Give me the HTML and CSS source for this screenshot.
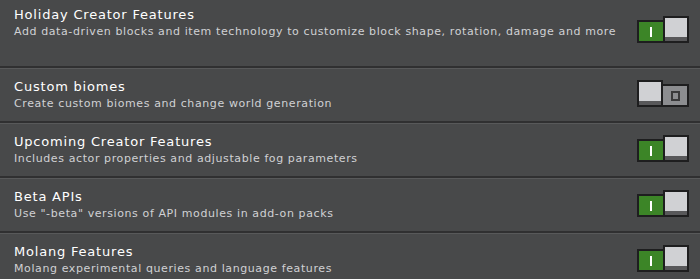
FILE: index.html
```html
<!DOCTYPE html>
<html lang="en">
<head>
  <meta charset="UTF-8">
  <meta name="viewport" content="width=device-width, initial-scale=1.0">
  <title>Experiments</title>
  <link rel="stylesheet" href="styles.css">
</head>
<body>
  <div class="list">
    <!-- Holiday -->
    <div class="row first">
      <div class="text">
        <div class="title">Holiday Creator Features</div>
        <div class="desc">Add data-driven blocks and item technology to customize block shape, rotation, damage and more</div>
      </div>
      <div class="toggle on">
        <div class="track"><span class="bar"></span></div>
        <div class="knob"></div>
      </div>
    </div>

    <div class="row">
      <div class="text">
        <div class="title">Custom biomes</div>
        <div class="desc">Create custom biomes and change world generation</div>
      </div>
      <div class="toggle off">
        <div class="knob"></div>
        <div class="track"><span class="ring"></span></div>
      </div>
    </div>

    <div class="row">
      <div class="text">
        <div class="title">Upcoming Creator Features</div>
        <div class="desc">Includes actor properties and adjustable fog parameters</div>
      </div>
      <div class="toggle on">
        <div class="track"><span class="bar"></span></div>
        <div class="knob"></div>
      </div>
    </div>

    <div class="row">
      <div class="text">
        <div class="title">Beta APIs</div>
        <div class="desc">Use "-beta" versions of API modules in add-on packs</div>
      </div>
      <div class="toggle on">
        <div class="track"><span class="bar"></span></div>
        <div class="knob"></div>
      </div>
    </div>

    <div class="row">
      <div class="text">
        <div class="title">Molang Features</div>
        <div class="desc">Molang experimental queries and language features</div>
      </div>
      <div class="toggle on">
        <div class="track"><span class="bar"></span></div>
        <div class="knob"></div>
      </div>
    </div>
  </div>
</body>
</html>
```

FILE: styles.css
```css
body {
  margin: 0;
  padding: 0;
  background-color: #48494a;
  font-family: "DejaVu Sans", sans-serif;
  overflow: hidden;
}
.list {
  width: 700px;
}
.row {
  display: flex;
  justify-content: space-between;
  align-items: flex-start;
  height: 53px;
  padding: 0 11px 0 14px;
  border-top: 2px solid #303031;
  box-shadow: inset 0 1px 0 #58595a;
}
.row.first {
  height: 66px;
  border-top: none;
  box-shadow: none;
}
.text {
  margin-top: 11px;
}
.first .text {
  margin-top: 7px;
}
.title {
  color: #ffffff;
  font-size: 13px;
  line-height: 16px;
  letter-spacing: 0.8px;
}
.desc {
  color: #d0d1d4;
  font-size: 11px;
  line-height: 14px;
  margin-top: 2px;
  letter-spacing: 0.6px;
}
.toggle {
  display: flex;
  align-items: flex-end;
  margin-top: 12px;
}
.first .toggle {
  margin-top: 16px;
}
.track {
  width: 24px;
  height: 19px;
  border: 2px solid #1e1e1f;
  display: flex;
  align-items: center;
  justify-content: center;
}
.on .track {
  background-color: #3c8527;
  margin-right: -2px;
}
.off .track {
  background-color: #8c8d90;
  margin-left: -2px;
}
.knob {
  width: 22px;
  height: 23px;
  border: 2px solid #1e1e1f;
  background-color: #d0d1d4;
  box-shadow: inset 0 -4px 0 #58585a;
  position: relative;
  z-index: 1;
}
.bar {
  width: 2px;
  height: 10px;
  background-color: #ffffff;
}
.ring {
  width: 5px;
  height: 6px;
  border: 2px solid #3a3a3b;
}
```
